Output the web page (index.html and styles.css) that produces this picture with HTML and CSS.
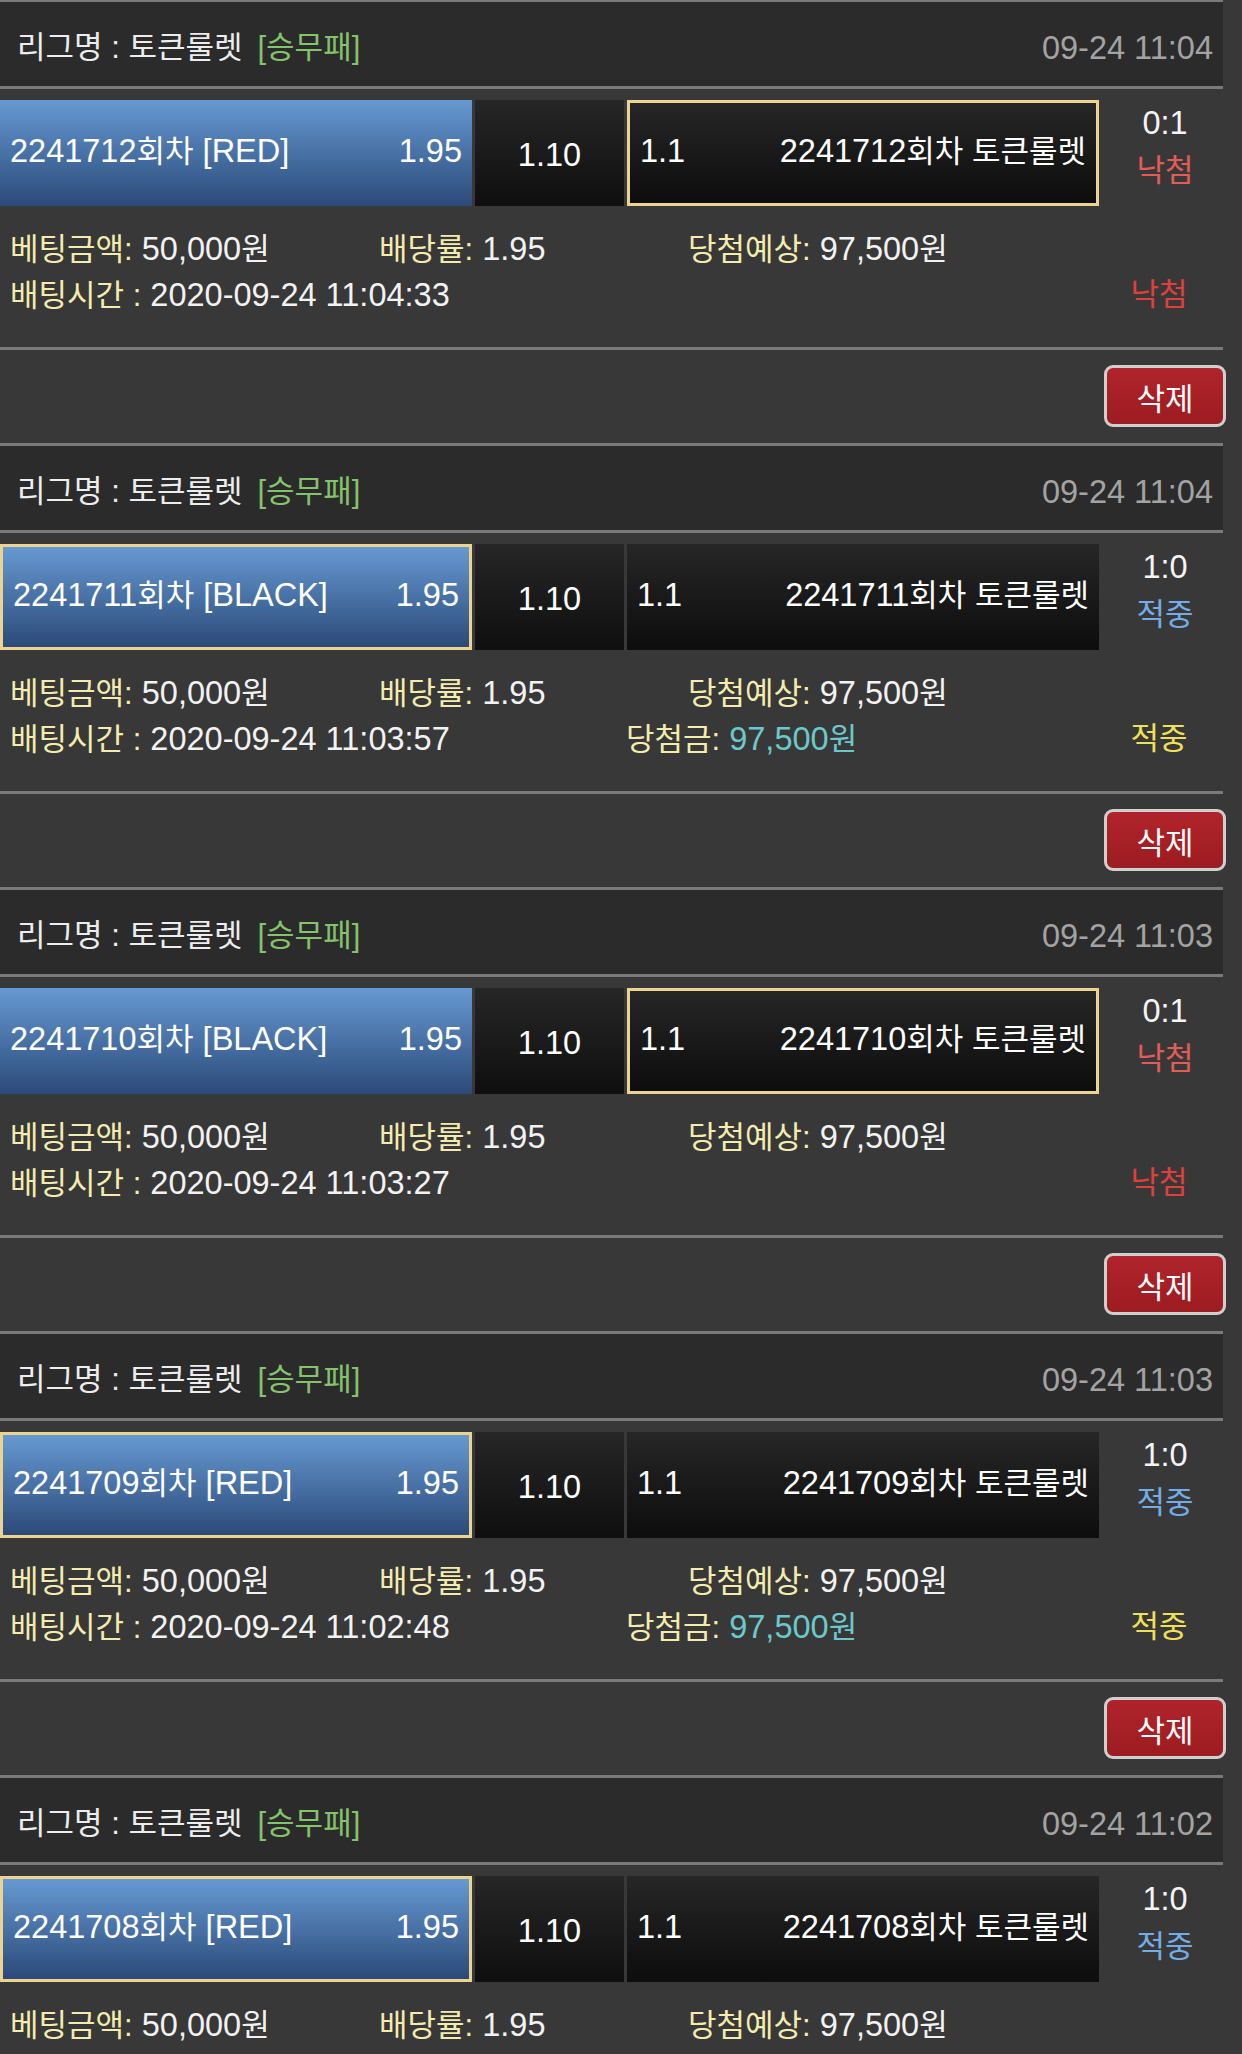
FILE: index.html
```html
<!DOCTYPE html>
<html lang="ko">
<head>
<meta charset="utf-8">
<title>베팅내역</title>
<link rel="stylesheet" href="styles.css">
</head>
<body>
<div class="list">

  <section class="card">
    <div class="league"><span class="lname">리그명 : 토큰룰렛</span><span class="ltype">[승무패]</span><span class="ltime">09-24 11:04</span></div>
    <div class="bet">
      <div class="home"><span>2241712<span class="k">회차</span> [RED]</span><span>1.95</span></div>
      <div class="draw">1.10</div>
      <div class="away selected"><span>1.1</span><span>2241712<span class="k">회차 토큰룰렛</span></span></div>
      <div class="score"><span class="sc">0:1</span><span class="k lose">낙첨</span></div>
    </div>
    <div class="info">
      <div class="line"><span class="c1"><b>베팅금액:</b> 50,000<span class="k">원</span></span><span class="c2"><b>배당률:</b> 1.95</span><span><b>당첨예상:</b> 97,500<span class="k">원</span></span></div>
      <div class="line"><span class="c1w"><b>배팅시간 :</b> 2020-09-24 11:04:33</span><span class="k status lose2">낙첨</span></div>
    </div>
    <div class="actions"><button class="del">삭제</button></div>
  </section>

  <section class="card">
    <div class="league"><span class="lname">리그명 : 토큰룰렛</span><span class="ltype">[승무패]</span><span class="ltime">09-24 11:04</span></div>
    <div class="bet">
      <div class="home selected"><span>2241711<span class="k">회차</span> [BLACK]</span><span>1.95</span></div>
      <div class="draw">1.10</div>
      <div class="away"><span>1.1</span><span>2241711<span class="k">회차 토큰룰렛</span></span></div>
      <div class="score"><span class="sc">1:0</span><span class="k win">적중</span></div>
    </div>
    <div class="info">
      <div class="line"><span class="c1"><b>베팅금액:</b> 50,000<span class="k">원</span></span><span class="c2"><b>배당률:</b> 1.95</span><span><b>당첨예상:</b> 97,500<span class="k">원</span></span></div>
      <div class="line"><span class="c1w"><b>배팅시간 :</b> 2020-09-24 11:03:57</span><span class="c2w"><b>당첨금:</b> <i class="prize">97,500<span class="k">원</span></i></span><span class="k status win2">적중</span></div>
    </div>
    <div class="actions"><button class="del">삭제</button></div>
  </section>

  <section class="card">
    <div class="league"><span class="lname">리그명 : 토큰룰렛</span><span class="ltype">[승무패]</span><span class="ltime">09-24 11:03</span></div>
    <div class="bet">
      <div class="home"><span>2241710<span class="k">회차</span> [BLACK]</span><span>1.95</span></div>
      <div class="draw">1.10</div>
      <div class="away selected"><span>1.1</span><span>2241710<span class="k">회차 토큰룰렛</span></span></div>
      <div class="score"><span class="sc">0:1</span><span class="k lose">낙첨</span></div>
    </div>
    <div class="info">
      <div class="line"><span class="c1"><b>베팅금액:</b> 50,000<span class="k">원</span></span><span class="c2"><b>배당률:</b> 1.95</span><span><b>당첨예상:</b> 97,500<span class="k">원</span></span></div>
      <div class="line"><span class="c1w"><b>배팅시간 :</b> 2020-09-24 11:03:27</span><span class="k status lose2">낙첨</span></div>
    </div>
    <div class="actions"><button class="del">삭제</button></div>
  </section>

  <section class="card">
    <div class="league"><span class="lname">리그명 : 토큰룰렛</span><span class="ltype">[승무패]</span><span class="ltime">09-24 11:03</span></div>
    <div class="bet">
      <div class="home selected"><span>2241709<span class="k">회차</span> [RED]</span><span>1.95</span></div>
      <div class="draw">1.10</div>
      <div class="away"><span>1.1</span><span>2241709<span class="k">회차 토큰룰렛</span></span></div>
      <div class="score"><span class="sc">1:0</span><span class="k win">적중</span></div>
    </div>
    <div class="info">
      <div class="line"><span class="c1"><b>베팅금액:</b> 50,000<span class="k">원</span></span><span class="c2"><b>배당률:</b> 1.95</span><span><b>당첨예상:</b> 97,500<span class="k">원</span></span></div>
      <div class="line"><span class="c1w"><b>배팅시간 :</b> 2020-09-24 11:02:48</span><span class="c2w"><b>당첨금:</b> <i class="prize">97,500<span class="k">원</span></i></span><span class="k status win2">적중</span></div>
    </div>
    <div class="actions"><button class="del">삭제</button></div>
  </section>

  <section class="card">
    <div class="league"><span class="lname">리그명 : 토큰룰렛</span><span class="ltype">[승무패]</span><span class="ltime">09-24 11:02</span></div>
    <div class="bet">
      <div class="home selected"><span>2241708<span class="k">회차</span> [RED]</span><span>1.95</span></div>
      <div class="draw">1.10</div>
      <div class="away"><span>1.1</span><span>2241708<span class="k">회차 토큰룰렛</span></span></div>
      <div class="score"><span class="sc">1:0</span><span class="k win">적중</span></div>
    </div>
    <div class="info">
      <div class="line"><span class="c1"><b>베팅금액:</b> 50,000<span class="k">원</span></span><span class="c2"><b>배당률:</b> 1.95</span><span><b>당첨예상:</b> 97,500<span class="k">원</span></span></div>
    </div>
  </section>

</div>
</body>
</html>
```

FILE: styles.css
```css
html, body {
  margin: 0;
  padding: 0;
  background: #383838;
}
body {
  width: 1242px;
  height: 2054px;
  overflow: hidden;
  font-family: "Liberation Sans", "Noto Sans CJK KR", sans-serif;
  font-size: 32.5px;
  color: #f2f2f2;
}
.k {
  font-size: 31px;
}
.list {
  margin-top: -1px;
}
.card {
  height: 444px;
  display: flex;
  flex-direction: column;
}
.league {
  width: 1223px;
  height: 84px;
  box-sizing: content-box;
  border-top: 3px solid #7a7a7a;
  border-bottom: 3px solid #7a7a7a;
  background: #2b2b2b;
  display: flex;
  align-items: center;
  line-height: 40px;
}
.lname {
  margin-left: 17px;
  color: #ededed;
  font-size: 31px;
  padding-top: 7px;
}
.ltype {
  margin-left: 15px;
  color: #85c26c;
  font-size: 31px;
  padding-top: 7px;
}
.ltime {
  margin-left: auto;
  margin-right: 10px;
  color: #a3a3a3;
  padding-top: 7px;
}
.bet {
  margin-top: 11px;
  height: 106px;
  display: flex;
  line-height: 40px;
}
.home {
  width: 472px;
  box-sizing: border-box;
  padding: 0 10px 4px;
  display: flex;
  justify-content: space-between;
  align-items: center;
  background: linear-gradient(#6699d2, #2b4a79);
  color: #fff;
}
.draw {
  width: 149px;
  margin-left: 3px;
  display: flex;
  align-items: center;
  justify-content: center;
  padding-top: 3px;
  box-sizing: border-box;
  background: linear-gradient(#262626, #0f0f0f);
  color: #fff;
}
.away {
  width: 472px;
  margin-left: 3px;
  box-sizing: border-box;
  padding: 0 10px 4px;
  display: flex;
  justify-content: space-between;
  align-items: center;
  background: linear-gradient(#262626 0%, #1c1c1c 40%, #0d0d0d 100%);
  color: #fff;
}
.selected {
  border: 3px solid #edd390;
}
.score {
  width: 132px;
  display: flex;
  flex-direction: column;
  align-items: center;
  line-height: 47px;
}
.sc { color: #f4f4f4; }
.lose { color: #e25c58; }
.win { color: #74ace6; }
.info {
  padding-top: 20px;
  border-bottom: 3px solid #7a7a7a;
  width: 1223px;
  box-sizing: content-box;
  height: 121px;
}
.line {
  display: flex;
  height: 46px;
  line-height: 46px;
  padding-left: 10px;
  white-space: nowrap;
}
.line b {
  font-weight: normal;
  font-size: 31px;
  color: #f3ecae;
}
.line i {
  font-style: normal;
}
.c1 { width: 369px; }
.c2 { width: 309px; }
.c1w { width: 616px; }
.prize { color: #6cc9cb; }
.status {
  margin-left: auto;
  width: 100px;
  margin-right: 14px;
  text-align: center;
}
.lose2 { color: #e0403c; }
.win2 { color: #efe05a; }
.actions {
  height: 93px;
  display: flex;
  justify-content: flex-end;
  align-items: flex-start;
}
.del {
  margin-top: 15px;
  margin-right: 16px;
  width: 122px;
  height: 62px;
  border: 3px solid #cfcfcf;
  border-radius: 9px;
  background: linear-gradient(#b0242a, #9c1c21);
  color: #fff;
  font-family: "Liberation Sans", "Noto Sans CJK KR", sans-serif;
  font-size: 31px;
  padding: 0;
}
```
